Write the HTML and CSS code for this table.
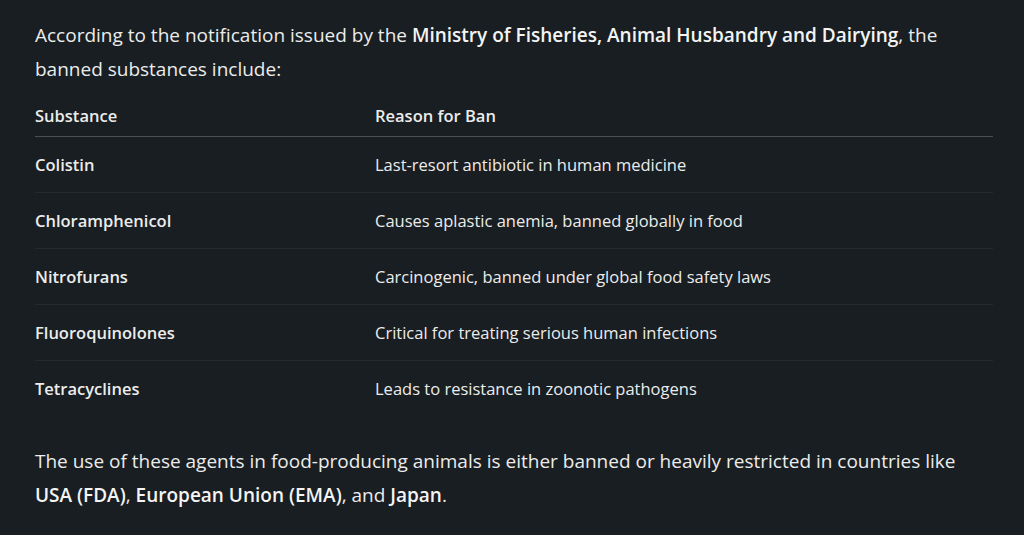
FILE: index.html
```html
<!DOCTYPE html>
<html lang="en">
<head>
    <meta charset="UTF-8">
    <meta name="viewport" content="width=device-width, initial-scale=1.0">
    <title>Banned Substances</title>
    <link rel="stylesheet" href="styles.css">
</head>
<body>
    <div class="content">
        <p class="text">According to the notification issued by the <strong>Ministry of Fisheries, Animal Husbandry and Dairying</strong>, the banned substances include:</p>

        <!-- Substances table -->
        <table class="ban-table">
            <thead>
                <tr>
                    <th class="col-name">Substance</th>
                    <th>Reason for Ban</th>
                </tr>
            </thead>
            <tbody>
                <tr>
                    <td><strong>Colistin</strong></td>
                    <td>Last-resort antibiotic in human medicine</td>
                </tr>
                <tr>
                    <td><strong>Chloramphenicol</strong></td>
                    <td>Causes aplastic anemia, banned globally in food</td>
                </tr>
                <tr>
                    <td><strong>Nitrofurans</strong></td>
                    <td>Carcinogenic, banned under global food safety laws</td>
                </tr>
                <tr>
                    <td><strong>Fluoroquinolones</strong></td>
                    <td>Critical for treating serious human infections</td>
                </tr>
                <tr>
                    <td><strong>Tetracyclines</strong></td>
                    <td>Leads to resistance in zoonotic pathogens</td>
                </tr>
            </tbody>
        </table>

        <p class="text">The use of these agents in food-producing animals is either banned or heavily restricted in countries like <strong>USA (FDA)</strong>, <strong>European Union (EMA)</strong>, and <strong>Japan</strong>.</p>
    </div>
</body>
</html>
```

FILE: styles.css
```css
body {
    margin: 0;
    padding: 0;
    background-color: #181e21;
    color: #ececec;
    font-family: "Open Sans", "Noto Sans", Arial, sans-serif;
}
.content {
    width: 958px;
    padding: 18px 0 0 35px;
}
.text {
    margin: 0;
    font-size: 19px;
    line-height: 34px;
}
.text strong {
    font-weight: 600;
    color: #f4f4f4;
}
.ban-table {
    width: 100%;
    border-collapse: collapse;
    margin: 10px 0 28px;
    font-size: 16.5px;
    line-height: 24px;
}
.ban-table th {
    text-align: left;
    font-weight: 600;
    padding: 8px 0;
    border-bottom: 1px solid #4a4f52;
}
.ban-table .col-name {
    width: 340px;
}
.ban-table td {
    padding: 16px 0 15px;
    border-bottom: 1px solid #242a2d;
}
.ban-table tbody tr:last-child td {
    border-bottom: none;
}
.ban-table td strong {
    font-weight: 600;
}
```
